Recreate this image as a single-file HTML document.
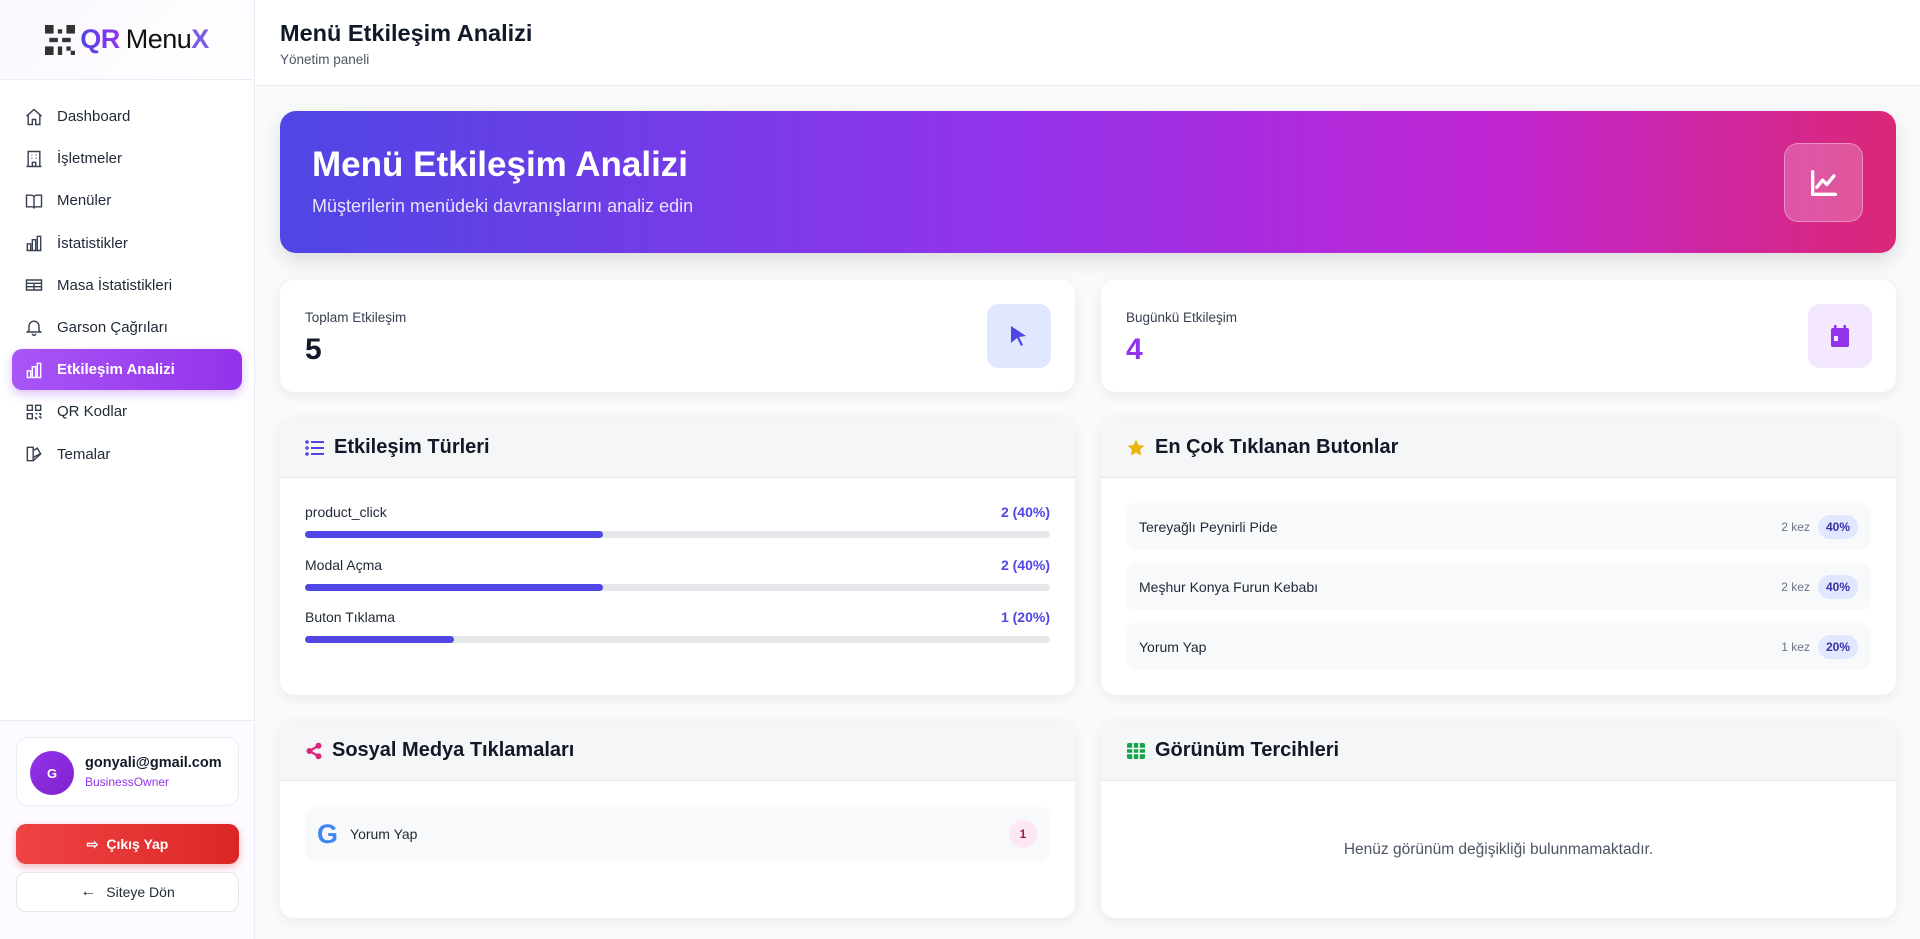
<!DOCTYPE html>
<html><head><meta charset="utf-8"><style>
*{box-sizing:border-box;margin:0;padding:0}
body{width:1920px;height:939px;overflow:hidden;font-family:"Liberation Sans",sans-serif;background:#f9fafb;color:#111827;position:relative}
.sb{position:absolute;left:0;top:0;width:255px;height:939px;background:#fff;border-right:1px solid #ede9f6}
.logo{height:80px;border-bottom:1px solid #ede9f6;display:flex;align-items:center;justify-content:center;background:linear-gradient(135deg,#faf7fe,#fff)}
.logo span{font-size:27px;letter-spacing:-0.5px}
.nav{position:absolute;top:96px;left:12px;width:230px}
.ni{height:41px;margin-bottom:1.2px;display:flex;align-items:center;padding-left:12px;font-size:15px;color:#1f2937;border-radius:10px}
.ni svg{width:20px;height:20px;margin-right:13px;fill:none;stroke:#374151;stroke-width:1.7}
.ni.act{background:linear-gradient(90deg,#a855f7,#9333ea);color:#fff;font-weight:bold;box-shadow:0 4px 10px rgba(147,51,234,.3)}
.ni.act svg{stroke:#fff}
.bot{position:absolute;top:720px;left:0;width:254px;height:219px;border-top:1px solid #ede9f6;background:#fcfbff}
.uc{position:absolute;left:16px;top:16px;width:223px;height:69px;border:1px solid #ede9f6;border-radius:12px;background:#fff}
.av{position:absolute;left:13px;top:13px;width:44px;height:44px;border-radius:50%;background:linear-gradient(135deg,#9333ea,#7e22ce);color:#fff;font-size:13px;font-weight:bold;display:flex;align-items:center;justify-content:center}
.btn{position:absolute;left:16px;width:223px;height:40px;border-radius:10px;display:flex;align-items:center;justify-content:center;font-size:14px}
.hdr{position:absolute;left:255px;top:0;right:0;height:86px;background:#fff;border-bottom:1px solid #e5e7eb}
.card{position:absolute;background:#fff;border-radius:14px;box-shadow:0 3px 12px rgba(0,0,0,.07)}
.ph{height:60px;background:#f5f6f8;border-bottom:1px solid #e5e7eb;border-radius:14px 14px 0 0;display:flex;align-items:center;padding-left:25px;font-size:20px;font-weight:bold}
.ph svg{margin-right:9px}
.row{position:absolute;left:25px;right:25px}
.lab{display:flex;justify-content:space-between;font-size:14px;color:#1f2937}
.lab b{color:#4f46e5}
.bar{margin-top:11px;height:7px;border-radius:4px;background:#e5e7eb}
.bar div{height:7px;border-radius:4px;background:#4f46e5}
.it{position:absolute;left:25px;right:25px;height:47px;background:#f8f9fb;border-radius:10px;display:flex;align-items:center;padding:0 13px;font-size:14px;color:#1f2937}
.it .r{margin-left:auto;font-size:12px;color:#6b7280;display:flex;align-items:center}
.pill{margin-left:8px;background:#e0e7ff;color:#3730a3;font-weight:bold;border-radius:12px;padding:5px 8px;font-size:12px}
</style></head><body>
<div class="sb">
 <div class="logo">
  <svg width="30" height="32" viewBox="0 0 7 7"><g fill="#333"><rect x="0" y="0" width="2" height="2"/><rect x="5" y="0" width="2" height="2"/><rect x="0" y="5" width="2" height="2"/><rect x="3" y="1" width="1" height="1"/><rect x="2" y="3" width="1" height="1"/><rect x="4" y="3" width="2" height="1"/><rect x="3" y="5" width="1" height="2"/><rect x="5" y="5" width="1" height="1"/><rect x="6" y="6" width="1" height="1"/><rect x="1" y="3" width="1" height="1"/></g></svg>
  <span style="margin-left:5px;font-weight:bold;background:linear-gradient(90deg,#4f46e5,#9333ea);-webkit-background-clip:text;color:transparent">QR</span><span style="margin-left:6px;color:#111">Menu</span><span style="font-weight:bold;color:#7c5ce0">X</span>
 </div>
 <div class="nav">
  <div class="ni"><svg viewBox="0 0 24 24"><path d="M3 11l9-8 9 8M5 9v12h5v-6h4v6h5V9"/></svg>Dashboard</div>
  <div class="ni"><svg viewBox="0 0 24 24"><path d="M5 21V3h14v18M3 21h18M9 7h1M14 7h1M9 11h1M14 11h1M10 21v-5h4v5"/></svg>İşletmeler</div>
  <div class="ni"><svg viewBox="0 0 24 24"><path d="M3 5h6a3 3 0 013 3v13a2 2 0 00-2-2H3zM21 5h-6a3 3 0 00-3 3v13a2 2 0 012-2h7z"/></svg>Menüler</div>
  <div class="ni"><svg viewBox="0 0 24 24"><path d="M4 21V13h4v8zM10 21V8h4v13zM16 21V4h4v17zM3 21h18"/></svg>İstatistikler</div>
  <div class="ni"><svg viewBox="0 0 24 24"><path d="M3 6h18v12H3zM3 10h18M3 14h18M12 10v8"/></svg>Masa İstatistikleri</div>
  <div class="ni"><svg viewBox="0 0 24 24"><path d="M6 16V11a6 6 0 0112 0v5l2 2H4zM10 20a2 2 0 004 0"/></svg>Garson Çağrıları</div>
  <div class="ni act"><svg viewBox="0 0 24 24"><path d="M4 21V13h4v8zM10 21V8h4v13zM16 21V4h4v17z"/></svg>Etkileşim Analizi</div>
  <div class="ni"><svg viewBox="0 0 24 24"><path d="M4 4h6v6H4zM14 4h6v6h-6zM4 14h6v6H4zM14 14h2M18 14h2v2M14 18v2h2M18 18h2v2"/></svg>QR Kodlar</div>
  <div class="ni"><svg viewBox="0 0 24 24"><path d="M4 4h7v16H4zM11 8l5-3 4 7-9 8M11 16l8-4"/></svg>Temalar</div>
 </div>
 <div class="bot">
  <div class="uc"><div class="av">G</div>
   <div style="position:absolute;left:68px;top:17px;font-size:14.5px;font-weight:bold;color:#111827">gonyali@gmail.com</div>
   <div style="position:absolute;left:68px;top:37px;font-size:12px;color:#9333ea">BusinessOwner</div></div>
  <div class="btn" style="top:103px;background:linear-gradient(90deg,#ef4444,#dc2626);color:#fff;font-weight:bold;box-shadow:0 3px 8px rgba(220,38,38,.3)"><span style="margin-right:8px">⇨</span>Çıkış Yap</div>
  <div class="btn" style="top:151px;background:#fff;border:1px solid #e5e7eb;color:#1f2937"><span style="margin-right:10px;font-size:16px">←</span>Siteye Dön</div>
 </div>
</div>
<div class="hdr">
 <div style="position:absolute;left:25px;top:20px;font-size:23.5px;font-weight:bold">Menü Etkileşim Analizi</div>
 <div style="position:absolute;left:25px;top:52px;font-size:13.5px;color:#4b5563">Yönetim paneli</div>
</div>
<div class="card" style="left:280px;top:111px;width:1616px;height:142px;border-radius:16px;background:linear-gradient(90deg,#4f46e5 0%,#9333ea 45%,#c026d3 75%,#db2777 100%);box-shadow:0 8px 20px rgba(0,0,0,.12)">
 <div style="position:absolute;left:32px;top:34px;font-size:35px;font-weight:bold;color:#fff">Menü Etkileşim Analizi</div>
 <div style="position:absolute;left:32px;top:85px;font-size:18px;color:#e9e3fb">Müşterilerin menüdeki davranışlarını analiz edin</div>
 <div style="position:absolute;left:1504px;top:32px;width:79px;height:79px;border-radius:14px;background:rgba(255,255,255,.22);border:1px solid rgba(255,255,255,.35);display:flex;align-items:center;justify-content:center">
  <svg width="34" height="34" viewBox="0 0 24 24" fill="none" stroke="#fff" stroke-width="2.4" stroke-linecap="round" stroke-linejoin="round"><path d="M4 4v16h16M7 15l4-5 3 3 5-6"/></svg></div>
</div>
<div class="card" style="left:280px;top:280px;width:795px;height:112px">
 <div style="position:absolute;left:25px;top:30px;font-size:13.5px;color:#374151">Toplam Etkileşim</div>
 <div style="position:absolute;left:25px;top:53px;font-size:30px;font-weight:bold">5</div>
 <div style="position:absolute;left:707px;top:24px;width:64px;height:64px;border-radius:12px;background:#e0e7ff;display:flex;align-items:center;justify-content:center"><svg width="20" height="22" viewBox="0 0 20 22"><path d="M2 1l15 10-7 1 4 8-2 1-4-8-6 5z" fill="#4f46e5"/></svg></div>
</div>
<div class="card" style="left:1101px;top:280px;width:795px;height:112px">
 <div style="position:absolute;left:25px;top:30px;font-size:13.5px;color:#374151">Bugünkü Etkileşim</div>
 <div style="position:absolute;left:25px;top:53px;font-size:30px;font-weight:bold;color:#9333ea">4</div>
 <div style="position:absolute;left:707px;top:24px;width:64px;height:64px;border-radius:12px;background:#f3e8ff;display:flex;align-items:center;justify-content:center"><svg width="20" height="24" viewBox="0 0 20 24"><rect x="4" y="1" width="2.5" height="5" fill="#9333ea"/><rect x="13.5" y="1" width="2.5" height="5" fill="#9333ea"/><rect x="1" y="4" width="18" height="19" rx="2" fill="#9333ea"/><rect x="4" y="12" width="4" height="5" fill="#f3e8ff"/></svg></div>
</div>
<div class="card" style="left:280px;top:418px;width:795px;height:277px">
 <div class="ph"><svg width="20" height="18" viewBox="0 0 20 18" fill="#4f46e5"><circle cx="2" cy="3" r="1.8"/><circle cx="2" cy="9" r="1.8"/><circle cx="2" cy="15" r="1.8"/><rect x="6" y="2" width="13" height="2"/><rect x="6" y="8" width="13" height="2"/><rect x="6" y="14" width="13" height="2"/></svg>Etkileşim Türleri</div>
 <div class="row" style="top:86px"><div class="lab"><span>product_click</span><b>2 (40%)</b></div><div class="bar"><div style="width:40%"></div></div></div>
 <div class="row" style="top:139px"><div class="lab"><span>Modal Açma</span><b>2 (40%)</b></div><div class="bar"><div style="width:40%"></div></div></div>
 <div class="row" style="top:191px"><div class="lab"><span>Buton Tıklama</span><b>1 (20%)</b></div><div class="bar"><div style="width:20%"></div></div></div>
</div>
<div class="card" style="left:1101px;top:418px;width:795px;height:277px">
 <div class="ph"><svg width="20" height="20" viewBox="0 0 24 24"><path d="M12 2l3 6.5 7 .8-5.2 4.8 1.4 7L12 17.6 5.8 21.1l1.4-7L2 9.3l7-.8z" fill="#eab308"/></svg>En Çok Tıklanan Butonlar</div>
 <div class="it" style="top:85px">Tereyağlı Peynirli Pide<div class="r">2 kez<span class="pill">40%</span></div></div>
 <div class="it" style="top:145px">Meşhur Konya Furun Kebabı<div class="r">2 kez<span class="pill">40%</span></div></div>
 <div class="it" style="top:205px">Yorum Yap<div class="r">1 kez<span class="pill">20%</span></div></div>
</div>
<div class="card" style="left:280px;top:721px;width:795px;height:197px">
 <div class="ph"><svg width="18" height="18" viewBox="0 0 24 24" fill="#db2777"><circle cx="18" cy="5" r="4"/><circle cx="6" cy="12" r="4"/><circle cx="18" cy="19" r="4"/><path d="M6 12L18 5M6 12l12 7" stroke="#db2777" stroke-width="3"/></svg>Sosyal Medya Tıklamaları</div>
 <div class="it" style="top:86px;height:54px;padding-left:12px"><span style="font-size:27px;font-weight:bold;color:#4285f4;margin-right:12px">G</span>Yorum Yap<div class="r"><span class="pill" style="background:#fce7f3;color:#9d174d;border-radius:50%;width:28px;height:28px;display:flex;align-items:center;justify-content:center;padding:0;margin-right:0">1</span></div></div>
</div>
<div class="card" style="left:1101px;top:721px;width:795px;height:197px">
 <div class="ph"><svg width="20" height="18" viewBox="0 0 20 18"><rect x="1" y="1" width="18" height="16" rx="2" fill="#16a34a"/><path d="M1 6.5h18M1 11.5h18M7 1v16M13 1v16" stroke="#fff" stroke-width="1.5"/></svg>Görünüm Tercihleri</div>
 <div style="position:absolute;left:0;right:0;top:120px;text-align:center;font-size:15.5px;color:#4b5563">Henüz görünüm değişikliği bulunmamaktadır.</div>
</div>
</body></html>
